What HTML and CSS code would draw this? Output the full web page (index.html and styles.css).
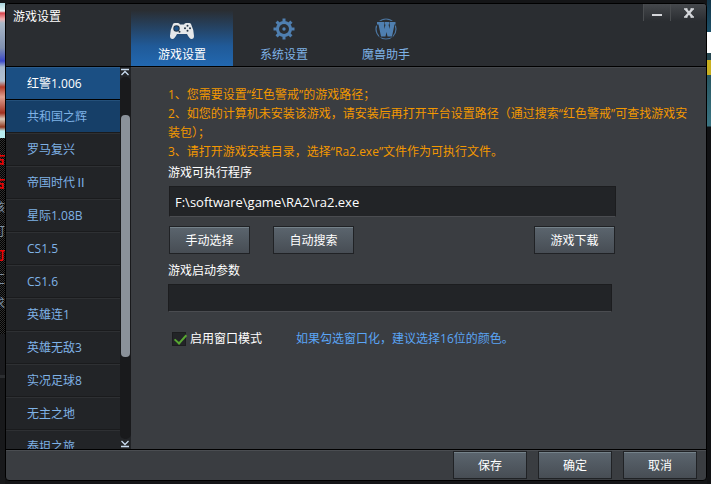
FILE: index.html
```
<!DOCTYPE html>
<html lang="zh-CN">
<head>
  <meta charset="UTF-8">
  <meta name="viewport" content="width=device-width, initial-scale=1.0">
  <title>游戏设置</title>
  <link rel="stylesheet" href="styles.css">
</head>
<body>
  <div class="backdrop-left">
    <div class="backdrop-art"></div>
    <div class="backdrop-list">
      <span class="hot">古</span>
      <span class="hot">古</span>
      <span>核</span>
      <span>可</span>
      <span class="hot">可</span>
      <span>工</span>
      <span>求</span>
    </div>
    <div class="backdrop-foot"></div>
  </div>

  <div class="window">
    <header class="titlebar">
      <h1 class="title">游戏设置</h1>
      <nav class="tabs">
        <button class="tab active">
          <svg width="26" height="18" viewBox="0 1 26 18">
            <path fill="#e6e8ea" d="M4 3 Q4.500 2 6 2 H9 Q10.500 2 11 3.500 H15 Q15.500 2 17 2 H20 Q21.500 2 22 3 Q25 9 25 15 Q25 18 22.500 18 Q20.500 18 18 13 H8 Q5.500 18 3.500 18 Q1 18 1 15 Q1 9 4 3 Z"/>
            <circle cx="7.500" cy="7.500" r="3.200" fill="#243444"/>
            <circle cx="7.500" cy="7.500" r="2.200" fill="#1d5288"/>
            <circle cx="18.500" cy="4.800" r="1" fill="#243444"/>
            <circle cx="18.500" cy="9.800" r="1" fill="#243444"/>
            <circle cx="16" cy="7.300" r="1" fill="#243444"/>
            <circle cx="21" cy="7.300" r="1" fill="#243444"/>
            <circle cx="10.500" cy="10.800" r="1" fill="#243444"/>
          </svg>
          游戏设置
        </button>
        <button class="tab">
          <svg width="22" height="22" viewBox="0 0 22 22">
            <g fill="#4f7fb0">
              <rect x="9.500" y="0.500" width="3" height="21"/>
              <rect x="9.500" y="0.500" width="3" height="21" transform="rotate(45 11 11)"/>
              <rect x="9.500" y="0.500" width="3" height="21" transform="rotate(90 11 11)"/>
              <rect x="9.500" y="0.500" width="3" height="21" transform="rotate(135 11 11)"/>
              <circle cx="11" cy="11" r="8"/>
            </g>
            <circle cx="11" cy="11" r="5" fill="#2a2d31"/>
            <circle cx="11" cy="11" r="1.700" fill="#4f7fb0"/>
          </svg>
          系统设置
        </button>
        <button class="tab">
          <svg width="22" height="22" viewBox="0 0 22 22">
            <circle cx="11" cy="11" r="10" fill="none" stroke="#4a749f" stroke-width="1.200"/>
            <path fill="#2a2d31" d="M1 3 H21 V7.500 H20 L17.500 19.500 H4.500 L2 7.500 H1 Z"/>
            <path fill="#4f7fb0" d="M2 4 H9.500 V6.500 H9 L9.500 11 L10.500 6.500 H10 V4 H14 V6.500 H13.500 L14.500 11 L15 6.500 H14.500 V4 H20.500 V6.500 H19.500 L17 18.500 H12.500 L11.500 14 L10.500 18.500 H6 L3.500 6.500 H2 Z"/>
          </svg>
          魔兽助手
        </button>
      </nav>
      <div class="window-buttons">
        <button class="window-button minimize" aria-label="最小化">
          <svg width="12" height="12" viewBox="0 0 12 12"><rect x="1" y="7" width="10" height="2" fill="#d4d6da"/></svg>
        </button>
        <button class="window-button close" aria-label="关闭">
          <svg width="12" height="12" viewBox="0 0 12 12"><path d="M2.500 2 L9.500 10 M9.500 2 L2.500 10" stroke="#d4d6da" stroke-width="2.400"/><path d="M1 2 H4.500 M7.500 2 H11 M1 10 H4.500 M7.500 10 H11" stroke="#d4d6da" stroke-width="1.500"/></svg>
        </button>
      </div>
    </header>

    <div class="content">
      <nav class="sidebar">
        <ul class="game-list">
          <li><a href="#" class="game selected">红警1.006</a></li>
          <li><a href="#" class="game hover">共和国之辉</a></li>
          <li><a href="#" class="game">罗马复兴</a></li>
          <li><a href="#" class="game">帝国时代Ⅱ</a></li>
          <li><a href="#" class="game">星际1.08B</a></li>
          <li><a href="#" class="game">CS1.5</a></li>
          <li><a href="#" class="game">CS1.6</a></li>
          <li><a href="#" class="game">英雄连1</a></li>
          <li><a href="#" class="game">英雄无敌3</a></li>
          <li><a href="#" class="game">实况足球8</a></li>
          <li><a href="#" class="game">无主之地</a></li>
          <li><a href="#" class="game">泰坦之旅</a></li>
        </ul>
        <div class="scrollbar">
          <button class="scroll-button" aria-label="向上">
            <svg width="10" height="10" viewBox="0 0 10 10"><path d="M1 2.500 H9 M1.500 8 L5 4.500 L8.500 8" fill="none" stroke="#c9dcf0" stroke-width="1.300"/></svg>
          </button>
          <div class="track"><div class="thumb"></div></div>
          <button class="scroll-button" aria-label="向下">
            <svg width="10" height="10" viewBox="0 0 10 10"><path d="M1 7.500 H9 M1.500 2 L5 5.500 L8.500 2" fill="none" stroke="#c9dcf0" stroke-width="1.300"/></svg>
          </button>
        </div>
      </nav>

      <main class="settings">
        <div class="tips">
          <p>1、您需要设置“红色警戒”的游戏路径；</p>
          <p>2、如您的计算机未安装该游戏，请安装后再打开平台设置路径（通过搜索“红色警戒”可查找游戏安装包）；</p>
          <p>3、请打开游戏安装目录，选择“Ra2.exe”文件作为可执行文件。</p>
        </div>
        <form class="settings-form">
          <label for="game-path">游戏可执行程序</label>
          <input type="text" id="game-path" class="text-box path" value="F:\software\game\RA2\ra2.exe">
          <div class="path-buttons">
            <button type="button" class="button">手动选择</button>
            <button type="button" class="button">自动搜索</button>
            <button type="button" class="button download">游戏下载</button>
          </div>
          <label for="game-args">游戏启动参数</label>
          <input type="text" id="game-args" class="text-box args">
          <div class="window-mode">
            <input type="checkbox" id="windowed" class="check" checked>
            <label for="windowed">启用窗口模式</label>
            <span class="note">如果勾选窗口化，建议选择16位的颜色。</span>
          </div>
        </form>
      </main>
    </div>

    <footer class="actions">
      <button class="button small save">保存</button>
      <button class="button small">确定</button>
      <button class="button small">取消</button>
    </footer>
  </div>

  <div class="backdrop-right"></div>
</body>
</html>
```

FILE: styles.css
```
* {
  box-sizing: border-box;
}

body {
  margin: 0;
  height: 100vh;
  display: flex;
  overflow: hidden;
  background-color: #141517;
  font-family: "Open Sans", "Noto Sans CJK SC", sans-serif;
  font-size: 12px;
  line-height: 18px;
  color: #fff;
}

h1, p, ul {
  margin: 0;
  padding: 0;
  font-size: 12px;
  font-weight: normal;
}

button {
  padding: 0;
  border: none;
  background: none;
  font: inherit;
  color: inherit;
  cursor: pointer;
}

svg {
  display: block;
}

/* what shows behind the dialog */
.backdrop-left {
  width: 5px;
  padding-top: 3px;
  display: flex;
  flex-direction: column;
}

.backdrop-art {
  height: 135px;
  background: linear-gradient(#a8d4dc 0, #e8f4f6 8px, #d8434c 10px, #f0b0b0 16px, #a9b8c8 20px, #8090b0 45px, #3a48c8 58px, #a8b8cc 64px, #b0c0d0 78px, #b03a28 84px, #e0a090 94px, #a03020 110px, #d8c8b8 116px, #903820 124px, #b8ecf0 128px);
}

.backdrop-list {
  height: 196px;
  padding-top: 10px;
  overflow: hidden;
  background: repeating-conic-gradient(#000 0 25%, #2e2e2e 0 50%) 0 0 / 2px 2px;
  color: #7a8ea4;
}

.backdrop-list span {
  display: block;
  height: 24px;
  line-height: 24px;
  text-indent: -7px;
}

.backdrop-list .hot {
  color: #f00000;
  font-weight: bold;
}

.backdrop-foot {
  flex: 1;
  background: linear-gradient(#1b1c1f 0, #1b1c1f 41px, #2c2e31 41px, #2c2e31 44px, #18191b 44px);
}

.backdrop-right {
  width: 4px;
  background: linear-gradient(#123448 0, #1d5068 32px, #fff 32px, #fff 53px, #274850 53px, #274850 60px, #c8b020 60px, #c8b020 75px, #275560 75px, #3a7482 126px, #101113 127px);
}

.window {
  flex: 1;
  min-width: 0;
  margin: 3px 0;
  display: flex;
  flex-direction: column;
  border: 1px solid #000;
  border-radius: 4px;
  overflow: hidden;
  background-color: #3a3d41;
}

.titlebar {
  height: 63px;
  display: flex;
  align-items: flex-start;
  background-color: #2a2d31;
  border-bottom: 1px solid #000;
}

.title {
  width: 125px;
  padding: 4px 7px;
}

.tabs {
  flex: 1;
  display: flex;
}

.tab {
  width: 102px;
  height: 62px;
  padding-bottom: 2px;
  display: flex;
  flex-direction: column;
  align-items: center;
  justify-content: flex-end;
  gap: 6px;
  color: #7fb2e6;
}

.tab.active {
  color: #fff;
  background: linear-gradient(#2a2d31 6px, #205a98 42px, #2268b0);
}

.window-buttons {
  display: flex;
}

.window-button {
  height: 17px;
  display: flex;
  align-items: center;
  justify-content: center;
  border-left: 1px solid #4a4d50;
  background: linear-gradient(#45484c, #2a2d31);
}

.minimize {
  width: 27px;
}

.close {
  width: 36px;
}

.content {
  flex: 1;
  min-height: 0;
  display: flex;
}

.sidebar {
  width: 125px;
  display: flex;
  background-color: #222427;
}

.game-list {
  flex: 1;
  overflow: hidden;
  list-style: none;
}

.game {
  display: block;
  height: 33px;
  padding-left: 21px;
  line-height: 32px;
  color: #7fb2e6;
  text-decoration: none;
  border-top: 1px solid #2e3033;
  border-bottom: 1px solid #1a1b1d;
}

.game.selected {
  color: #fff;
  background-color: #1b4f83;
  border-top-color: #2b5c8c;
  border-bottom-color: #000;
}

.game.hover {
  background-color: #163f68;
  border-top-color: #24507a;
}

.scrollbar {
  width: 11px;
  display: flex;
  flex-direction: column;
  background-color: #222427;
}

.scroll-button {
  height: 10px;
}

.track {
  flex: 1;
  padding: 38px 1px 0;
  border-radius: 5px;
  background-color: #191a1c;
}

.thumb {
  height: 242px;
  border-radius: 4px;
  background-color: #8a9199;
}

.settings {
  flex: 1;
  padding: 17px 18px 0 37px;
  border-top: 1px solid #45484c;
}

.tips {
  margin-bottom: 3px;
  line-height: 19px;
  color: #f39800;
}

.settings-form {
  display: flex;
  flex-direction: column;
  padding-right: 72px;
}

.text-box {
  padding: 0 5px;
  border: 1px solid #1c1d1f;
  border-bottom-color: #4a4c50;
  background-color: #222427;
  color: #fff;
  font-family: inherit;
  font-size: 13px;
}

.path {
  height: 31px;
  margin: 4px 0 9px 1px;
}

.args {
  height: 28px;
  margin: 4px 4px 18px 0;
}

.path-buttons {
  display: flex;
  gap: 23px;
  margin: 0 1px 8px;
}

.button {
  width: 81px;
  height: 28px;
  padding-top: 2px;
  border: 1px solid #202225;
  background: linear-gradient(#5b656e, #474d54);
  box-shadow: inset 0 1px #75828a;
}

.download {
  margin-left: auto;
}

.window-mode {
  display: flex;
  align-items: center;
}

.check {
  appearance: none;
  position: relative;
  width: 14px;
  height: 14px;
  margin: 0 4px;
  border: 1px solid #1c1d1f;
  background-color: #222427;
}

.check:checked::after {
  content: "";
  position: absolute;
  left: 4px;
  top: -1px;
  width: 5px;
  height: 10px;
  border: solid #58a832;
  border-width: 0 2px 2px 0;
  transform: rotate(42deg);
}

.note {
  margin-left: 34px;
  color: #5aa5f5;
}

.actions {
  height: 31px;
  padding: 1px 9px 0 0;
  display: flex;
  justify-content: flex-end;
  gap: 11px;
  border-top: 1px solid #000;
  box-shadow: inset 0 1px #4a4d51;
}

.small {
  width: 74px;
}
```
